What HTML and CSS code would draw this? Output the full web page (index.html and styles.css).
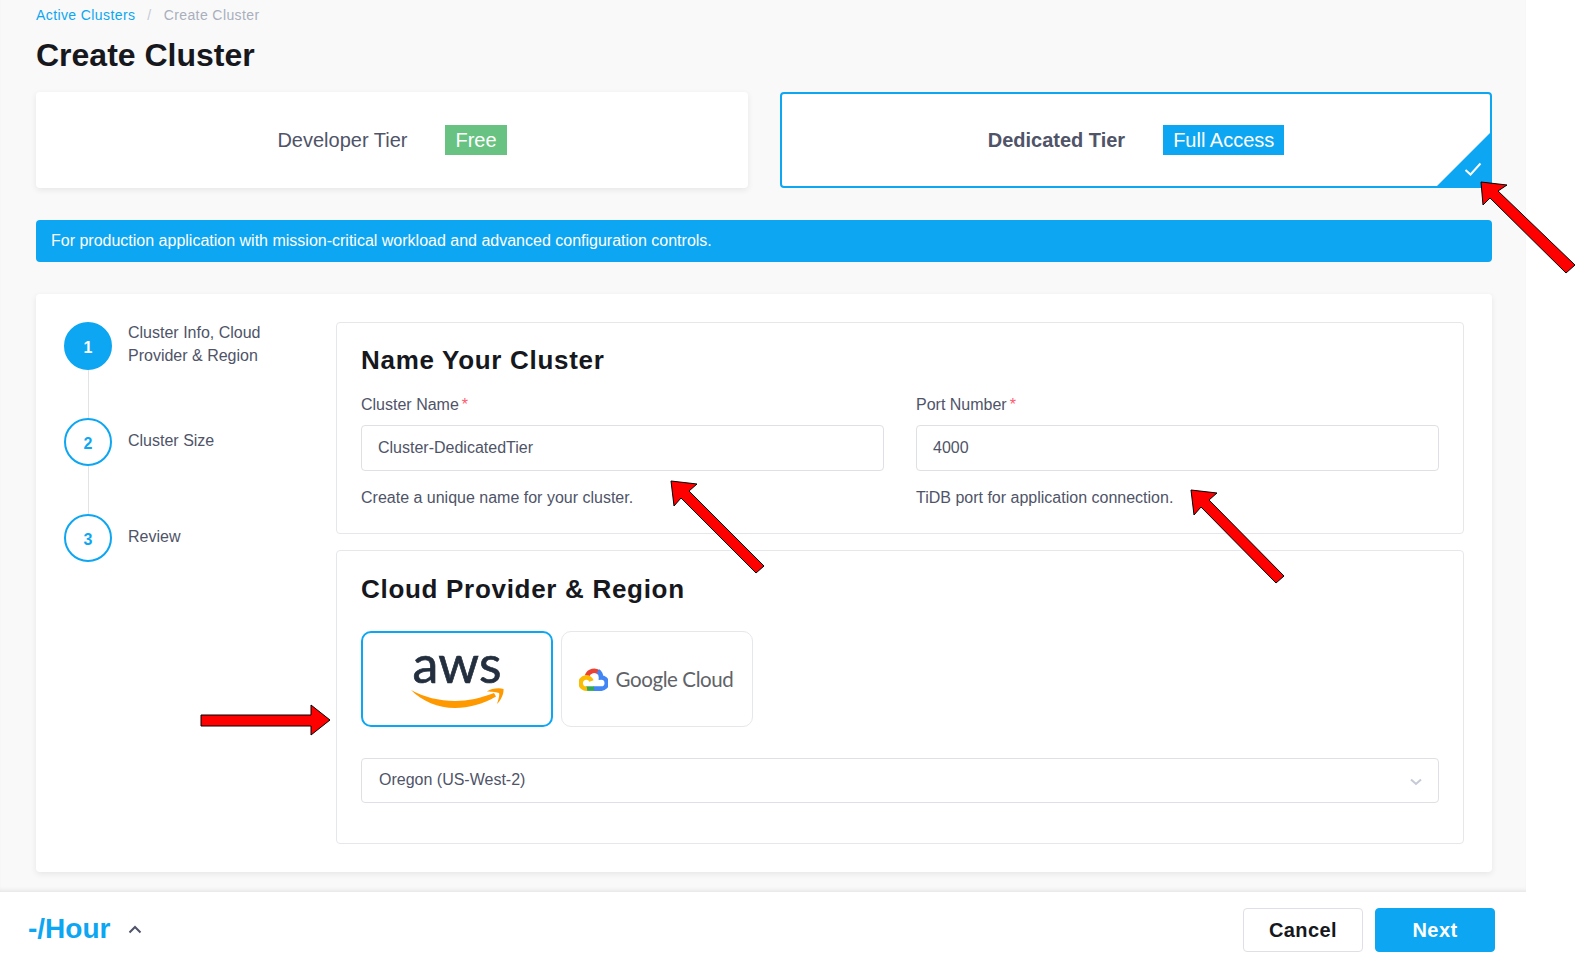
FILE: index.html
```html
<!DOCTYPE html>
<html lang="en">
<head>
    <meta charset="utf-8">
    <meta name="viewport" content="width=device-width, initial-scale=1">
    <title>Create Cluster</title>
    <link rel="stylesheet" href="styles.css">
</head>
<body>
    <div class="page">
        <div class="breadcrumb">
            <a class="crumb-link">Active Clusters</a>
            <span class="crumb-sep">/</span>
            <span class="crumb-current">Create Cluster</span>
        </div>
        <h1 class="page-title">Create Cluster</h1>

        <div class="tiers">
            <div class="tier">
                <span class="tier-name">Developer Tier</span>
                <span class="tier-badge badge-green">Free</span>
            </div>
            <div class="tier tier-active">
                <span class="tier-name">Dedicated Tier</span>
                <span class="tier-badge badge-blue">Full Access</span>
                <span class="tier-corner"></span>
                <svg class="tier-check" width="18" height="14" viewBox="0 0 18 14">
                    <path d="M1.5 8 L6.5 12.5 L16.5 1.5" fill="none" stroke="#fff" stroke-width="2"/>
                </svg>
            </div>
        </div>

        <div class="banner">For production application with mission-critical workload and advanced configuration controls.</div>

        <div class="panel">
            <div class="steps">
                <div class="step">
                    <div class="step-mark">
                        <div class="step-num step-num-active">1</div>
                        <div class="step-line"></div>
                    </div>
                    <div class="step-text">Cluster Info, Cloud<br>Provider &amp; Region</div>
                </div>
                <div class="step">
                    <div class="step-mark">
                        <div class="step-num">2</div>
                        <div class="step-line"></div>
                    </div>
                    <div class="step-text">Cluster Size</div>
                </div>
                <div class="step">
                    <div class="step-mark">
                        <div class="step-num">3</div>
                    </div>
                    <div class="step-text">Review</div>
                </div>
            </div>

            <div class="forms">
                <section class="section section-name">
                    <h2 class="section-title">Name Your Cluster</h2>
                    <div class="fields">
                        <div class="field">
                            <div class="field-label">Cluster Name<span class="required">*</span></div>
                            <div class="input">Cluster-DedicatedTier</div>
                            <div class="field-help">Create a unique name for your cluster.</div>
                        </div>
                        <div class="field">
                            <div class="field-label">Port Number<span class="required">*</span></div>
                            <div class="input">4000</div>
                            <div class="field-help">TiDB port for application connection.</div>
                        </div>
                    </div>
                </section>

                <section class="section section-cloud">
                    <h2 class="section-title">Cloud Provider &amp; Region</h2>
                    <div class="providers">
                        <div class="provider provider-active">
                            <div class="aws-word">aws</div>
                            <svg class="aws-smile" width="93" height="22" viewBox="0 0 93 22">
                                <path d="M0 2 C13 9 28 13 44 13 C57 13 70 10 83 5 L85 8.5 C72 16 58 20 44 20 C27 20 11 13 0 2 Z" fill="#ff9900"/>
                                <path d="M76 3.5 C80 0.5 88 -0.5 92.5 1 C93 5 90.5 12 86 16 C87 12 89 7.5 88 5 C86 4 81 4 76 3.5 Z" fill="#ff9900"/>
                            </svg>
                        </div>
                        <div class="provider provider-google">
                            <svg class="gcp-icon" width="29" height="23" viewBox="0 0 29 23" fill="none" stroke-width="4.6">
                                <path d="M8 8 A7.5 7.5 0 0 1 20.5 5" stroke="#ea4335"/>
                                <path d="M19 3 A8 8 0 0 1 22 9.5 A5.4 5.4 0 0 1 22.5 20.6 H14.5" stroke="#4285f4"/>
                                <path d="M15 20.6 H7" stroke="#34a853"/>
                                <path d="M8 20.6 A5.6 5.6 0 0 1 6.5 9.5 A5.5 5.5 0 0 1 12.5 13" stroke="#fbbc05"/>
                            </svg>
                            <span class="gcp-word">Google Cloud</span>
                        </div>
                    </div>
                    <div class="select">
                        <span class="select-value">Oregon (US-West-2)</span>
                        <svg class="select-arrow" width="12" height="8" viewBox="0 0 12 8">
                            <path d="M1 1.5 L6 6 L11 1.5" fill="none" stroke="#c5cad6" stroke-width="2"/>
                        </svg>
                    </div>
                </section>
            </div>
        </div>
    </div>

    <div class="footer">
        <div class="price">
            <span class="price-value">-/Hour</span>
            <svg width="14" height="9" viewBox="0 0 14 9">
                <path d="M1.5 7.5 L7 2 L12.5 7.5" fill="none" stroke="#4f5468" stroke-width="2"/>
            </svg>
        </div>
        <div class="actions">
            <button class="btn btn-cancel">Cancel</button>
            <button class="btn btn-next">Next</button>
        </div>
    </div>

    <!-- red annotation arrows drawn over the screenshot -->
    <svg class="arrows" width="1575" height="966" viewBox="0 0 1575 966">
        <g fill="#ff0000" stroke="#000" stroke-width="1">
            <polygon points="1481,182 1483,205 1490,198 1566,273 1575,265 1498,191 1507,185"/>
            <polygon points="671,481 674,506 681,498 756,573 764,566 689,491 697,484"/>
            <polygon points="1191,490 1194,515 1201,507 1276,583 1284,576 1209,500 1217,493"/>
            <polygon points="201,715 311,715 311,705 330,720 311,735 311,726 201,726"/>
        </g>
    </svg>
</body>
</html>
```

FILE: styles.css
```css
* {
    box-sizing: border-box;
}
body {
    margin: 0;
    background: #fff;
    color: #4f5468;
    font-family: "Liberation Sans", Arial, sans-serif;
    font-size: 16px;
}
.page {
    width: 1526px;
    height: 892px;
    padding: 0 34px 0 36px;
    background: #f9f9f9;
    box-shadow: inset 0 -4px 5px -3px rgba(0, 0, 0, 0.1);
}
.breadcrumb {
    display: flex;
    height: 30px;
    align-items: center;
    font-size: 14px;
    letter-spacing: 0.4px;
}
.crumb-link {
    color: #0ca6f2;
}
.crumb-sep {
    margin: 0 12px;
    color: #c5cad6;
}
.crumb-current {
    color: #a9afbd;
}
.page-title {
    margin: 0;
    height: 62px;
    padding-top: 5px;
    color: #16181d;
    font-size: 32px;
    line-height: 40px;
    font-weight: bold;
}
.tiers {
    display: grid;
    grid-template-columns: 712px 712px;
    gap: 32px;
}
.tier {
    position: relative;
    display: flex;
    height: 96px;
    align-items: center;
    justify-content: center;
    gap: 38px;
    background: #fff;
    border-radius: 4px;
    box-shadow: 0 2px 6px rgba(0, 0, 0, 0.08);
    font-size: 20px;
    overflow: hidden;
}
.tier-active {
    border: 2px solid #0ca6f2;
    box-shadow: none;
    font-weight: bold;
}
.tier-badge {
    display: block;
    padding: 0 10px;
    color: #fff;
    font-weight: normal;
    line-height: 30px;
}
.badge-green {
    background: #68c281;
}
.badge-blue {
    background: #0ca6f2;
}
.tier-corner {
    position: absolute;
    right: 0;
    bottom: 0;
    width: 53px;
    height: 53px;
    background: #0ca6f2;
    clip-path: polygon(100% 0, 100% 100%, 0 100%);
}
.tier-check {
    position: absolute;
    right: 8px;
    bottom: 10px;
}
.banner {
    height: 42px;
    margin-top: 32px;
    padding-left: 15px;
    background: #0ca6f2;
    border-radius: 4px;
    color: #fff;
    line-height: 42px;
}
.panel {
    display: flex;
    height: 578px;
    margin-top: 32px;
    padding: 28px;
    background: #fff;
    border-radius: 4px;
    box-shadow: 0 2px 6px rgba(0, 0, 0, 0.08);
}
.steps {
    width: 272px;
    flex-shrink: 0;
}
.step {
    display: flex;
    height: 96px;
    gap: 16px;
}
.step-mark {
    display: flex;
    flex-direction: column;
    align-items: center;
}
.step-num {
    display: flex;
    width: 48px;
    height: 48px;
    padding-top: 3px;
    align-items: center;
    justify-content: center;
    flex-shrink: 0;
    border: 2px solid #0ca6f2;
    border-radius: 50%;
    color: #0ca6f2;
    font-weight: bold;
}
.step-num-active {
    background: #0ca6f2;
    color: #fff;
}
.step-line {
    width: 1px;
    flex: 1;
    background: #e2e3e8;
}
.step-text {
    display: flex;
    height: 44px;
    align-items: center;
    line-height: 23px;
}
.forms {
    flex: 1;
    display: flex;
    flex-direction: column;
    gap: 16px;
}
.section {
    padding: 0 24px;
    border: 1px solid #e6e7eb;
    border-radius: 4px;
}
.section-name {
    height: 212px;
}
.section-cloud {
    height: 294px;
}
.section-title {
    margin: 0;
    padding-top: 21px;
    color: #16181d;
    font-size: 26px;
    line-height: 34px;
    font-weight: bold;
    letter-spacing: 0.7px;
}
.section-name .section-title {
    padding-top: 20px;
}
.fields {
    display: grid;
    grid-template-columns: 1fr 1fr;
    gap: 32px;
    margin-top: 16px;
}
.field-label {
    line-height: 24px;
}
.required {
    margin-left: 3px;
    color: #ff5a6e;
}
.input {
    height: 46px;
    margin-top: 8px;
    padding-left: 16px;
    border: 1px solid #dfe0e5;
    border-radius: 4px;
    line-height: 44px;
}
.field-help {
    margin-top: 15px;
    line-height: 24px;
}
.providers {
    display: flex;
    gap: 8px;
    margin-top: 25px;
}
.provider {
    display: flex;
    width: 192px;
    height: 96px;
    align-items: center;
    justify-content: center;
    border: 1px solid #e6e7eb;
    border-radius: 10px;
    gap: 8px;
}
.provider-active {
    flex-direction: column;
    gap: 0;
    border: 2px solid #0ca6f2;
}
.provider-google {
    padding-right: 2px;
}
.aws-word {
    margin-top: -8px;
    color: #232f3e;
    font-family: Lato, sans-serif;
    font-size: 52px;
    line-height: 44px;
    -webkit-text-stroke: 0.7px #232f3e;
}
.aws-smile {
    margin-top: 3px;
}
.gcp-word {
    color: #5f6368;
    font-family: Lato, sans-serif;
    font-size: 20.5px;
    letter-spacing: -0.4px;
}
.select {
    display: flex;
    height: 45px;
    align-items: center;
    justify-content: space-between;
    margin-top: 31px;
    padding: 0 16px 0 17px;
    border: 1px solid #dfe0e5;
    border-radius: 4px;
}
.select-value {
    margin-top: -2px;
}
.select-arrow {
    margin-top: 2px;
}
.footer {
    display: flex;
    height: 74px;
    align-items: center;
    justify-content: space-between;
    padding: 2px 80px 0 28px;
    background: #fff;
}
.price {
    display: flex;
    align-items: center;
    gap: 18px;
    margin-top: -2px;
}
.price-value {
    color: #0ca6f2;
    font-size: 28px;
    font-weight: bold;
}
.actions {
    display: flex;
    gap: 12px;
}
.btn {
    width: 120px;
    height: 44px;
    border: 1px solid #dfe0e5;
    border-radius: 4px;
    background: #fff;
    color: #16181d;
    font-family: inherit;
    font-size: 20px;
    font-weight: bold;
    letter-spacing: 0.4px;
}
.btn-next {
    border-color: #0ca6f2;
    background: #0ca6f2;
    color: #fff;
}
.arrows {
    position: absolute;
    top: 0;
    left: 0;
    pointer-events: none;
}
```
